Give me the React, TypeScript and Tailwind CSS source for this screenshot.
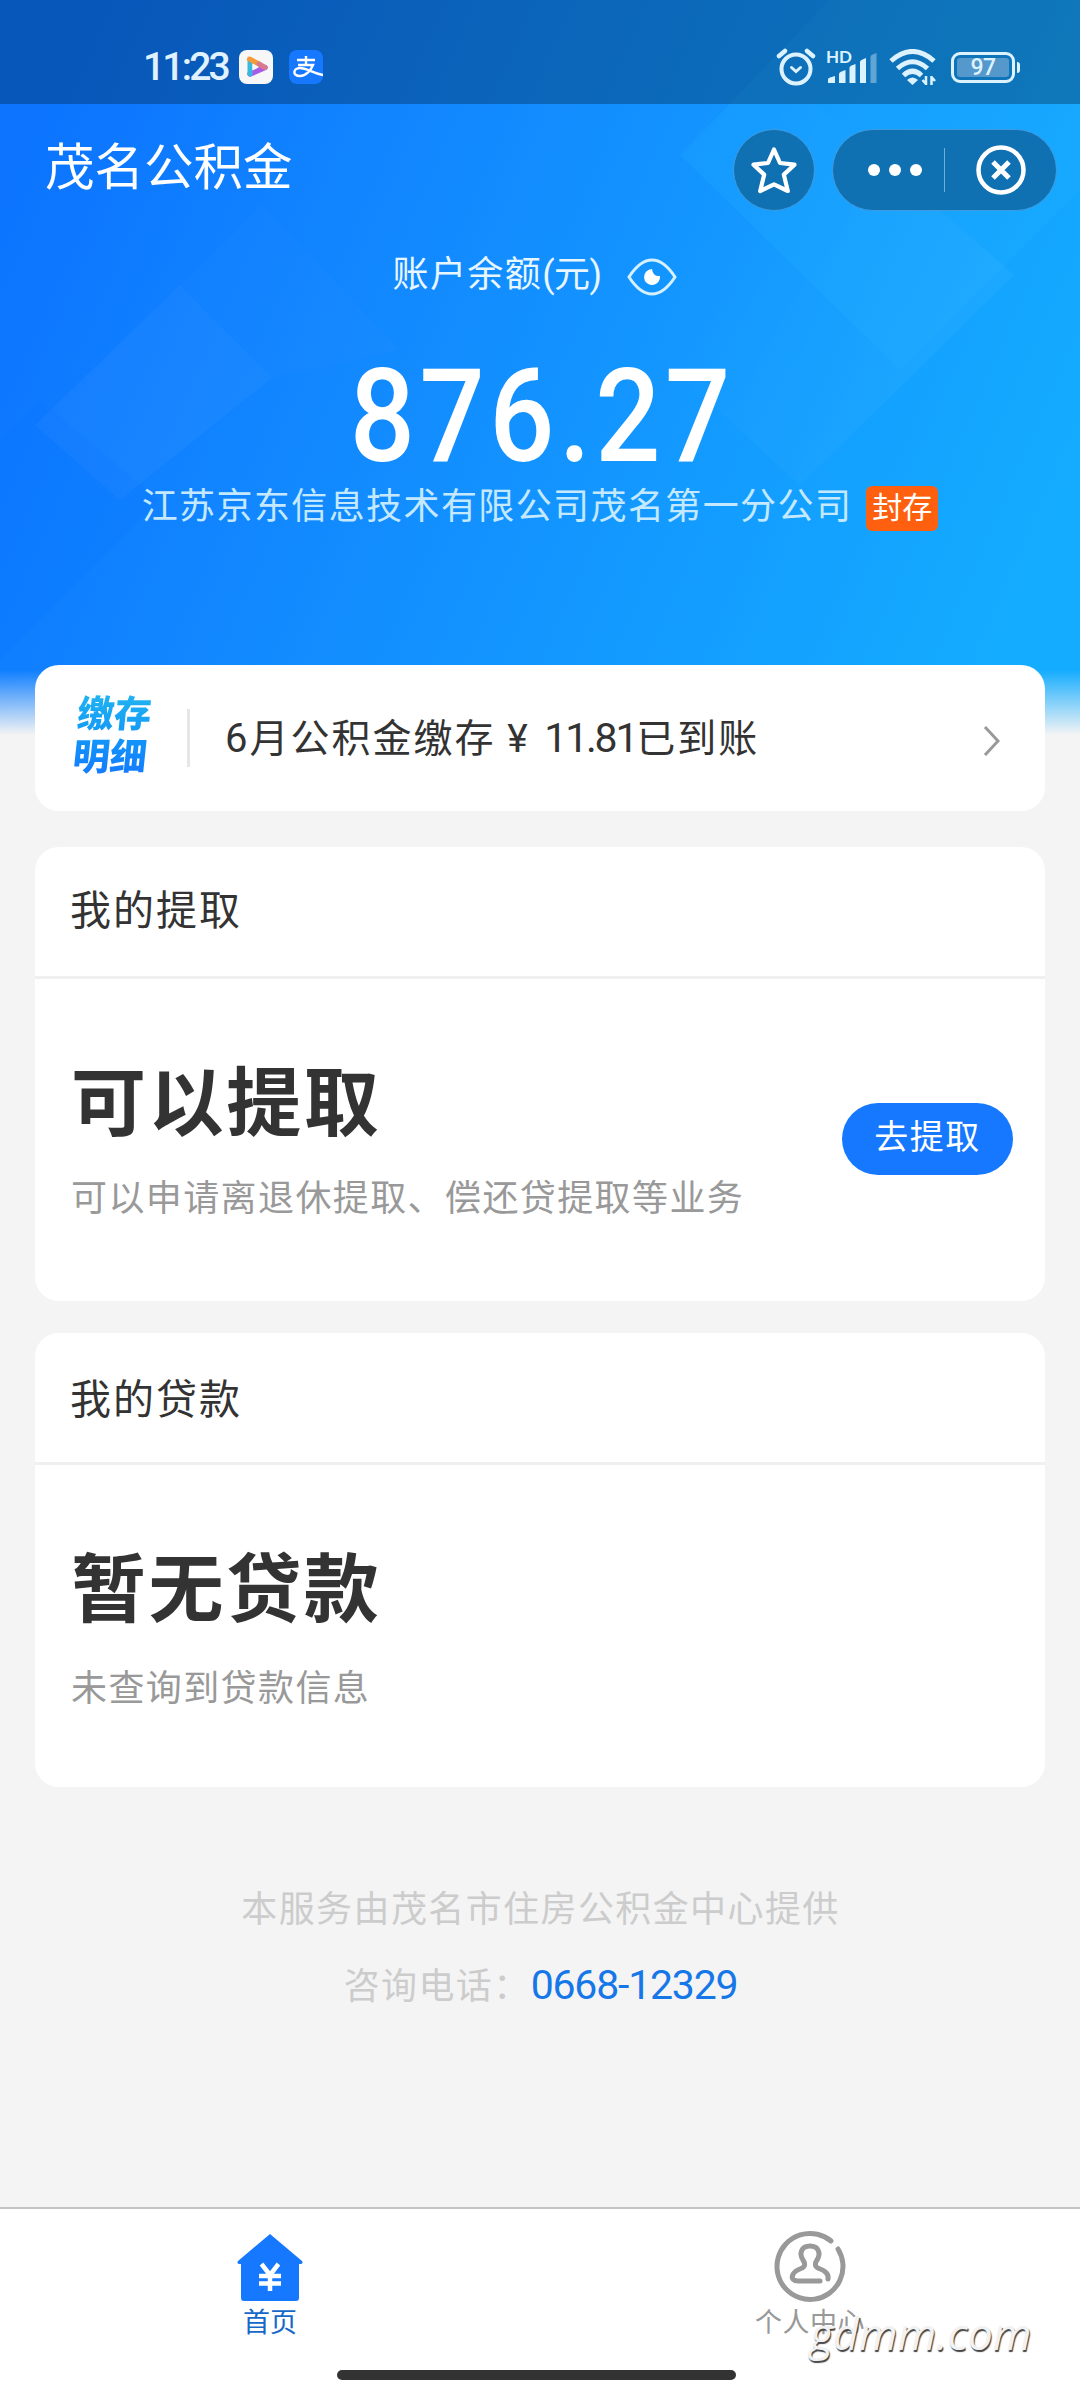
import React from "react";

function StatusBar() {
  return (
    <div className="flex h-[104px] items-center bg-[#002038]/35 pl-[143px] pr-[60px] pt-[30px]">
      <span className="w-[92px] whitespace-nowrap text-[39px] font-medium leading-[50px] tracking-[-2.800px] text-[#e0f2ff]">11:23</span>
      <svg className="ml-1 h-[34px] w-[34px]" viewBox="0 0 34 34">
        <rect width="34" height="34" rx="8" fill="#f7f7f7" />
        <path d="M11 24L26 17.500" stroke="#a85be8" strokeWidth="5.500" strokeLinecap="round" />
        <path d="M11 24V10" stroke="#38b8dd" strokeWidth="5" strokeLinecap="round" />
        <path d="M10.500 9L20 14" stroke="#f59a38" strokeWidth="5" strokeLinecap="round" />
        <path d="M20 14L26 17.500" stroke="#d77a8e" strokeWidth="5" strokeLinecap="round" />
        <path d="M13.500 14L19.500 17.500L13.500 20.500Z" fill="#f7f7f7" />
      </svg>
      <div className="ml-4 flex h-[34px] w-[34px] items-center justify-center rounded-lg bg-[#1677ff]">
        <svg className="h-[34px] w-[34px]" viewBox="0 0 34 34" fill="none" stroke="#fff" strokeWidth="2.400">
          <path d="M8 10H26M17 6V15M9 15H24C22 20 17 26 11 26C3 26 4 18 11 18C18 18 23 23 34 25" />
        </svg>
      </div>
      <div className="ml-auto flex items-center text-[#dcf3ff]">
        <svg className="mr-[2px] h-[38px] w-[40px]" viewBox="0 0 40 38" fill="none" stroke="currentColor" strokeWidth="4" strokeLinecap="round">
          <circle cx="20" cy="21" r="14.500" />
          <path d="M3 8L9 3M37 8L31 3" strokeWidth="4.500" />
          <path d="M15.500 19.500L20 23.500L24.500 19.500" strokeWidth="3" />
        </svg>
        <div className="relative ml-[8px] h-[36px] w-[55px]">
          <span className="absolute left-0 top-[-1px] font-[Lato] text-[17px] font-bold leading-[18px]">HD</span>
          <svg className="ml-[1px] h-[36px] w-[52px]" viewBox="0 0 52 36" fill="currentColor">
            <path d="M1 34V30.500Q1 29 3 28.500L8 27V34Z" />
            <path d="M12 34V25Q12 23.500 14 22.800L18.500 21V34Z" />
            <path d="M22.500 34V19Q22.500 17.500 24 16.800L28.500 15V34Z" />
            <path d="M33 34V13Q33 11.500 35 10.800L39 9V34Z" />
            <path d="M43.500 34V8Q43.500 6.500 45 5.800L49.500 4V34Z" opacity="0.4" />
          </svg>
        </div>
        <svg className="ml-[8px] mr-[2px] h-[36px] w-[48px]" viewBox="0 0 48 36" fill="none" stroke="currentColor" strokeWidth="5">
          <path d="M2 12Q23.500 -7 45 12M8.500 19.500Q23.500 6 38.500 19.500M14.500 26.500Q23.500 18 32.500 26.500" />
          <path d="M18 31Q23.500 26 29 31L23.500 36Z" fill="currentColor" stroke="none" />
          <path d="M37 27V36M42.500 27V36M37 35L33.500 31M42.500 28L46 32" strokeWidth="2.500" />
        </svg>
        <div className="ml-[12px] flex h-[31px] w-[64px] items-center justify-center rounded-[9px] border-[3px] border-current p-[3px]">
          <div className="flex h-full w-full items-center justify-center rounded-[3px] bg-[#5598cc] text-[23px] font-medium leading-none tracking-[-0.500px]">97</div>
        </div>
        <div className="ml-[2px] h-[11px] w-[3px] rounded-r bg-current" />
      </div>
    </div>
  );
}

function Capsule() {
  return (
    <div className="mt-[2px] flex gap-[17px]">
      <div className="flex h-[82px] w-[82px] items-center justify-center rounded-full border border-[#3f9be0] bg-[#0f70b2]">
        <svg className="h-[50px] w-[50px]" viewBox="0 0 50 50" fill="none" stroke="#fff" strokeWidth="4.200" strokeLinejoin="round">
          <path d="M25 4.500L31 18L45.500 19.700L34.800 29.600L38.800 46L25 39.300L11.200 46L15.200 29.600L4.500 19.700L19 18Z" />
        </svg>
      </div>
      <div className="flex h-[82px] w-[225px] items-center rounded-full border border-[#3f9be0] bg-[#0f70b2] pl-[35px]">
        <div className="flex gap-[9px]">
          <i className="h-3 w-3 rounded-full bg-white" />
          <i className="h-3 w-3 rounded-full bg-white" />
          <i className="h-3 w-3 rounded-full bg-white" />
        </div>
        <div className="ml-[22px] h-11 w-px bg-[#72aed6]" />
        <svg className="ml-[30px] h-[52px] w-[52px]" viewBox="0 0 52 52" fill="none" stroke="#fff" strokeWidth="4.500">
          <circle cx="26" cy="26" r="22.500" />
          <path d="M18 18L34 34M34 18L18 34" strokeWidth="5" />
        </svg>
      </div>
    </div>
  );
}

function HeroBackground() {
  return (
    <svg className="absolute inset-0 h-[735px] w-[1080px]" viewBox="0 0 1080 735" preserveAspectRatio="none">
      <defs>
        <linearGradient id="sky" gradientUnits="userSpaceOnUse" x1="0" y1="200" x2="1000" y2="640">
          <stop offset="0" stopColor="#0c74ff" />
          <stop offset="0.350" stopColor="#1288ff" />
          <stop offset="1" stopColor="#14acff" />
        </linearGradient>
        <linearGradient id="fade" x1="0" y1="0" x2="0" y2="1">
          <stop offset="0" stopColor="#f4f4f4" stopOpacity="0" />
          <stop offset="1" stopColor="#f4f4f4" />
        </linearGradient>
        <linearGradient id="sheen" x1="0" y1="0" x2="1" y2="0.600">
          <stop offset="0.300" stopColor="#fff" stopOpacity="0" />
          <stop offset="1" stopColor="#fff" stopOpacity="0.040" />
        </linearGradient>
      </defs>
      <rect width="1080" height="735" fill="url(#sky)" />
      <path d="M35 425L180 285L272 378L120 500Z" fill="#fff" opacity="0.035" />
      <path d="M180 285L262 205L400 350L272 378Z" fill="#fff" opacity="0.015" />
      <path d="M830 0L680 155L900 370L1080 190V0Z" fill="#22b4ff" opacity="0.200" />
      <path d="M790 80L1014 275L800 485L620 320Z" fill="url(#sheen)" />
      <path d="M0 660L160 500L40 400L0 440Z" fill="#0068ff" opacity="0.080" />
      <rect y="670" width="1080" height="65" fill="url(#fade)" />
    </svg>
  );
}

type InfoCardProps = {
  title: React.ReactNode;
  headline: string;
  children: React.ReactNode;
  action?: string;
};

function InfoCard({ title, headline, children, action }: InfoCardProps) {
  return (
    <section className="h-[454px] overflow-hidden rounded-[24px] bg-white">
      <div className="flex h-[132px] items-center border-b-[3px] border-[#f0f0f0] pl-[35px] text-[41px] tracking-[2px] text-[#333]">{title}</div>
      <div className="flex h-[322px] items-center justify-between pl-[36px] pr-[32px]">
        <div className="flex flex-col">
          <h2 className="text-[75px] font-bold leading-[100px] tracking-[2.600px] text-[#333]">{headline}</h2>
          {children}
        </div>
        {action && (
          <button className="mt-[-3px] h-[72px] w-[171px] rounded-full bg-[#1677ff] pb-[4px] text-[34px] leading-none tracking-[1.500px] text-white">{action}</button>
        )}
      </div>
    </section>
  );
}

function TabBar() {
  return (
    <nav className="relative flex h-[193px] border-t-2 border-[#c4c4c4] bg-white">
      <div className="flex w-1/2 flex-col items-center pt-[24px] text-[#1668c8]">
        <svg className="h-[70px] w-[68px]" viewBox="0 0 68 70">
          <path d="M34 1L66 28Q68 31 63 31V65Q63 68 60 68H8Q5 68 5 65V31Q0 31 2 28Z" fill="#1677ff" />
          <path d="M25.500 31L34 42L42.500 31M34 42V58M23 43H45M23 50.500H45" fill="none" stroke="#fff" strokeWidth="4.500" />
        </svg>
        <span className="text-[27px] leading-[40px]">首页</span>
      </div>
      <div className="flex w-1/2 flex-col items-center pt-[21px] text-[#999]">
        <svg className="h-[72px] w-[72px]" viewBox="0 0 72 72" fill="none" stroke="currentColor" strokeWidth="5" strokeLinecap="round">
          <path d="M57 11A33 33 0 1 0 64 19" />
          <path d="M46 51H24C15 51 17 42 27 38.500C32 36.500 31 33 29 30C25 24 27 16 36 16C45 16 47 24 43 30C41 33 40 36.500 45 38.500C52 41 55 44 54 49" />
        </svg>
        <span className="mt-[1px] text-[27px] leading-[40px] tracking-[0.500px]">个人中心</span>
      </div>
      <span className="absolute left-[810px] top-[94px] font-['Open_Sans'] text-[44.500px] italic leading-[60px] text-[#f2f2f2] [text-shadow:1px_2px_1px_#444]">gdmm.com</span>
      <div className="absolute bottom-[20px] left-[337px] h-[10px] w-[399px] rounded-full bg-[#333]" />
    </nav>
  );
}

export default function App() {
  return (
    <div className="relative flex h-[2400px] w-[1080px] flex-col overflow-hidden bg-[#f4f4f4] font-['Roboto','Noto_Sans_CJK_SC',sans-serif]">
      <HeroBackground />
      <div className="relative flex h-[665px] flex-col">
        <StatusBar />
        <header className="flex h-[130px] items-center justify-between pl-[45px] pr-[23px]">
          <h1 className="mt-[-2px] text-[49.500px] leading-[60px] text-white">茂名公积金</h1>
          <Capsule />
        </header>
        <div className="mt-[13px] flex h-[56px] items-center justify-center gap-[26px] pr-[10px]">
          <span className="text-[36px] leading-[56px] tracking-[1.400px] text-[#e8f7ff]">账户余额<span className="tracking-[-0.500px]">(元)</span></span>
          <svg className="mt-[3px] h-[38px] w-[50px]" viewBox="0 0 50 38" fill="none" stroke="#d5f0ff" strokeWidth="3">
            <path d="M2 19Q13 2 25 2T48 19Q37 36 25 36T2 19Z" />
            <path d="M25 11A8 8 0 1 0 33 18Q26 19 25 11Z" fill="#fff" stroke="none" />
          </svg>
        </div>
        <div className="mt-[50px] flex h-[128px] items-center justify-center pl-[4px]">
          <span className="scale-x-[0.890] whitespace-nowrap text-[129px] font-medium leading-[128px] tracking-[5px] text-white">876.27</span>
        </div>
        <div className="flex h-[52px] items-center justify-center gap-[14px]">
          <span className="text-[36px] leading-[52px] tracking-[1.400px] text-[#c4e9ff]">江苏京东信息技术有限公司茂名第一分公司</span>
          <span className="mt-[2px] flex h-[45px] w-[72px] items-center justify-center rounded-[6px] bg-[#ff6010] text-[30px] leading-none text-white">封存</span>
        </div>
      </div>

      <main className="relative flex flex-col px-[35px]">
        <section className="flex h-[146px] items-center rounded-[24px] bg-white pl-[40px] pr-[45px]">
          <div className="mt-[-5px] w-[78px] -skew-x-6 whitespace-nowrap bg-gradient-to-b from-[#22b4f0] to-[#1677ff] bg-clip-text text-[37px] font-black leading-[43px] text-transparent">
            缴存<br />明细
          </div>
          <div className="ml-[34px] h-[58px] w-[3px] bg-[#e6e6e6]" />
          <span className="ml-[35px] mt-[2px] text-[39px] tracking-[2px] text-[#333]">
            <span className="text-[40px]">6</span>月公积金缴存 ¥ <span className="ml-[3px] text-[41px] tracking-[-2.200px]">11.81</span>已到账
          </span>
          <svg className="ml-auto mt-[5px] h-[32px] w-[17px]" viewBox="0 0 17 32" fill="none" stroke="#999" strokeWidth="3">
            <path d="M2 2L15 16L2 30" />
          </svg>
        </section>
        <div className="mt-[36px] flex flex-col gap-[32px]">
          <InfoCard title="我的提取" headline="可以提取" action="去提取">
            <p className="mt-[18px] text-[36px] leading-[54px] tracking-[1.400px] text-[#999]">可以申请离退休提取、偿还贷提取等业务</p>
          </InfoCard>
          <InfoCard title={<span className="mt-[7px]">我的贷款</span>} headline="暂无贷款">
            <p className="mb-[-4px] mt-[22px] text-[36px] leading-[54px] tracking-[1.400px] text-[#999]">未查询到贷款信息</p>
          </InfoCard>
        </div>
      </main>

      <footer className="relative mt-[96px] flex flex-col items-center pl-[1px] text-[36px] leading-[54px] tracking-[1.400px] text-[#ccc]">
        <p>本服务由茂名市住房公积金中心提供</p>
        <p className="mt-[21px]">咨询电话：<span className="text-[41px] tracking-[-1.200px] text-[#1677e8]">0668-12329</span></p>
      </footer>
      <div className="relative mt-auto"><TabBar /></div>
    </div>
  );
}
